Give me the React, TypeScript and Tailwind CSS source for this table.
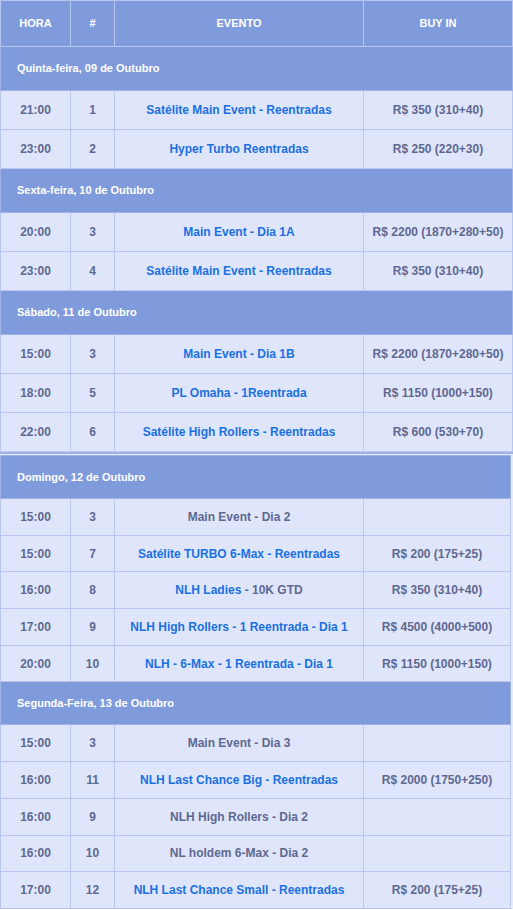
import React from 'react';

type Row = {
  hora: string;
  num: string;
  evento: string;
  extra?: string;
  link?: boolean;
  buyin?: string;
};

type Day = { titulo: string; rows: Row[] };

const semana1: Day[] = [
  {
    titulo: 'Quinta-feira, 09 de Outubro',
    rows: [
      { hora: '21:00', num: '1', evento: 'Satélite Main Event - Reentradas', link: true, buyin: 'R$ 350 (310+40)' },
      { hora: '23:00', num: '2', evento: 'Hyper Turbo Reentradas', link: true, buyin: 'R$ 250 (220+30)' },
    ],
  },
  {
    titulo: 'Sexta-feira, 10 de Outubro',
    rows: [
      { hora: '20:00', num: '3', evento: 'Main Event - Dia 1A', link: true, buyin: 'R$ 2200 (1870+280+50)' },
      { hora: '23:00', num: '4', evento: 'Satélite Main Event - Reentradas', link: true, buyin: 'R$ 350 (310+40)' },
    ],
  },
  {
    titulo: 'Sábado, 11 de Outubro',
    rows: [
      { hora: '15:00', num: '3', evento: 'Main Event - Dia 1B', link: true, buyin: 'R$ 2200 (1870+280+50)' },
      { hora: '18:00', num: '5', evento: 'PL Omaha - 1Reentrada', link: true, buyin: 'R$ 1150 (1000+150)' },
      { hora: '22:00', num: '6', evento: 'Satélite High Rollers - Reentradas', link: true, buyin: 'R$ 600 (530+70)' },
    ],
  },
];

const semana2: Day[] = [
  {
    titulo: 'Domingo, 12 de Outubro',
    rows: [
      { hora: '15:00', num: '3', evento: 'Main Event - Dia 2' },
      { hora: '15:00', num: '7', evento: 'Satélite TURBO 6-Max - Reentradas', link: true, buyin: 'R$ 200 (175+25)' },
      { hora: '16:00', num: '8', evento: 'NLH Ladies', extra: ' - 10K GTD', link: true, buyin: 'R$ 350 (310+40)' },
      { hora: '17:00', num: '9', evento: 'NLH High Rollers - 1 Reentrada - Dia 1', link: true, buyin: 'R$ 4500 (4000+500)' },
      { hora: '20:00', num: '10', evento: 'NLH - 6-Max - 1 Reentrada - Dia 1', link: true, buyin: 'R$ 1150 (1000+150)' },
    ],
  },
  {
    titulo: 'Segunda-Feira, 13 de Outubro',
    rows: [
      { hora: '15:00', num: '3', evento: 'Main Event - Dia 3' },
      { hora: '16:00', num: '11', evento: 'NLH Last Chance Big - Reentradas', link: true, buyin: 'R$ 2000 (1750+250)' },
      { hora: '16:00', num: '9', evento: 'NLH High Rollers - Dia 2' },
      { hora: '16:00', num: '10', evento: 'NL holdem 6-Max - Dia 2' },
      { hora: '17:00', num: '12', evento: 'NLH Last Chance Small - Reentradas', link: true, buyin: 'R$ 200 (175+25)' },
    ],
  },
];

const cell = 'border border-[#b9c6f1] text-center align-middle';

function Tabela({ dias, head, rowH, dayH }: { dias: Day[]; head?: boolean; rowH: string; dayH: string }) {
  return (
    <table className="w-full border-collapse table-fixed">
      <colgroup>
        <col className="w-[70px]" />
        <col className="w-[44px]" />
        <col className="w-[249px]" />
        <col />
      </colgroup>
      <tbody>
        {head && (
          <tr className="h-[46px] bg-[#809bdb] text-white text-[11px]">
            <th className={cell}>HORA</th>
            <th className={cell}>#</th>
            <th className={cell}>EVENTO</th>
            <th className={cell}>BUY IN</th>
          </tr>
        )}
        {dias.map((d) => (
          <React.Fragment key={d.titulo}>
            <tr className={`${dayH} bg-[#809bdb]`}>
              <td colSpan={4} className="border border-[#9fb2e6] pl-[16px] text-left text-[11px] font-bold text-white">
                {d.titulo}
              </td>
            </tr>
            {d.rows.map((r, i) => (
              <tr key={i} className={`${rowH} bg-[#dfe6fb] text-[12px] font-bold text-[#5e6890]`}>
                <td className={cell}>{r.hora}</td>
                <td className={cell}>{r.num}</td>
                <td className={cell}>
                  <span className={r.link ? 'text-[#1b70e2]' : ''}>{r.evento}</span>
                  {r.extra && <span>{r.extra}</span>}
                </td>
                <td className={cell}>{r.buyin}</td>
              </tr>
            ))}
          </React.Fragment>
        ))}
      </tbody>
    </table>
  );
}

export default function App() {
  return (
    <div className="w-[513px] bg-[#e6ebfc]" style={{ fontFamily: '"Liberation Sans", Arial, sans-serif' }}>
      <Tabela dias={semana1} head rowH="h-[39px]" dayH="h-[44px]" />
      <div className="h-[2px] bg-[#9fb2e6]" />
      <div className="w-[511px] pt-[1px]">
        <Tabela dias={semana2} rowH="h-[36.7px]" dayH="h-[43px]" />
      </div>
    </div>
  );
}
